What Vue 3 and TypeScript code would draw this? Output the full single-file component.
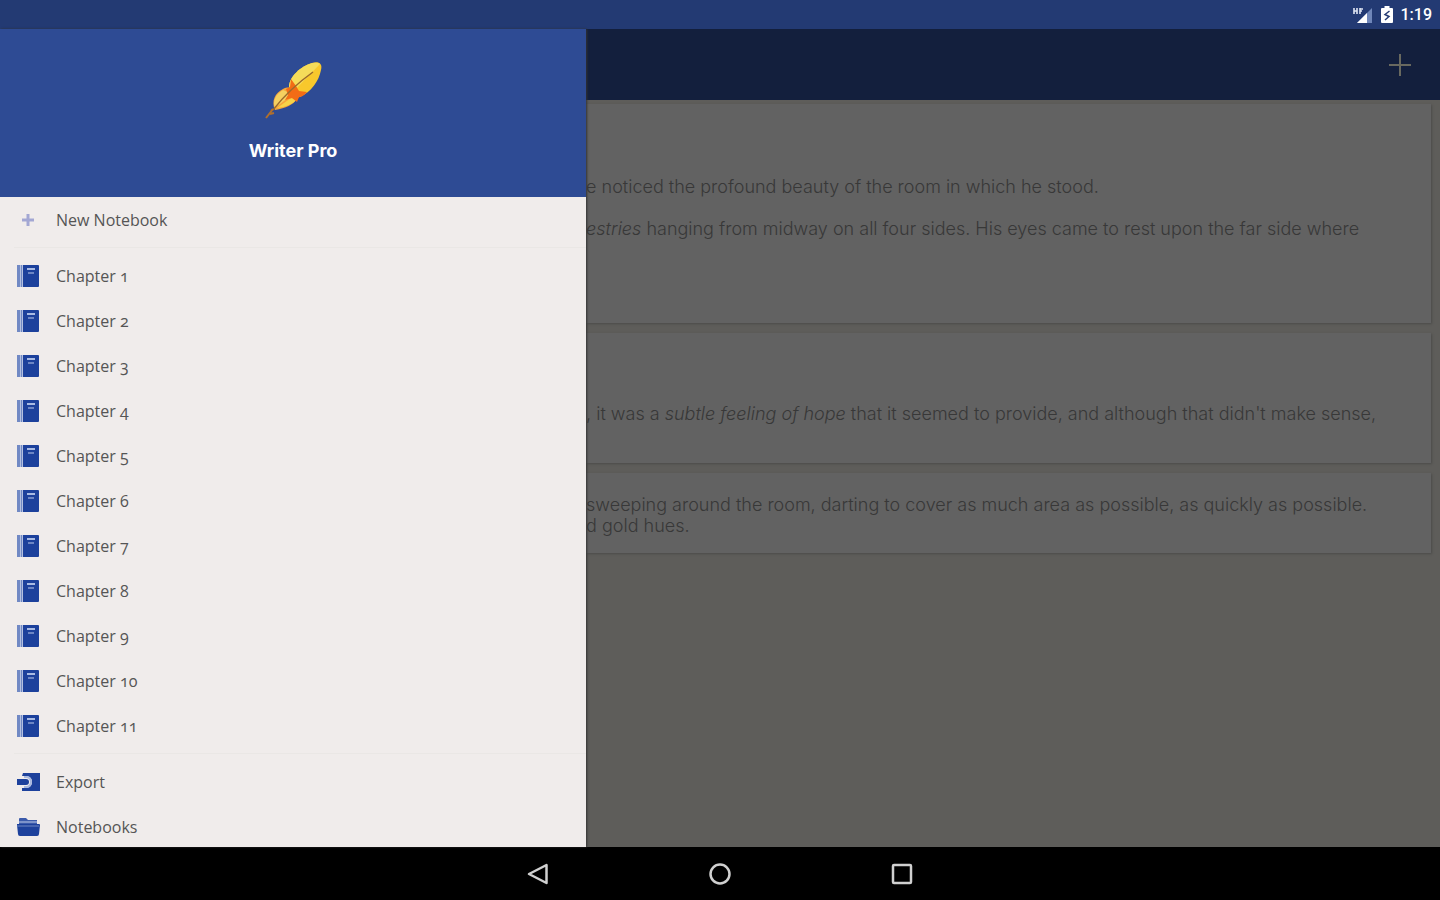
<script setup lang="ts">
interface Segment {
  text: string
  em?: boolean
}
interface Card {
  kind: string
  paragraphs: Segment[][][]
}

const chapters: string[] = Array.from({ length: 11 }, (_, i) => `Chapter ${i + 1}`)

const cards: Card[] = [
  {
    kind: 'tall',
    paragraphs: [
      [[{ text: 'e noticed the profound beauty of the room in which he stood.' }]],
      [[
        { text: 'estries', em: true },
        { text: ' hanging from midway on all four sides. His eyes came to rest upon the far side where' },
      ]],
    ],
  },
  {
    kind: 'medium',
    paragraphs: [
      [[
        { text: ', it was a ' },
        { text: 'subtle feeling of hope', em: true },
        { text: " that it seemed to provide, and although that didn't make sense," },
      ]],
    ],
  },
  {
    kind: 'short',
    paragraphs: [
      [
        [{ text: 'sweeping around the room, darting to cover as much area as possible, as quickly as possible.' }],
        [{ text: 'd gold hues.' }],
      ],
    ],
  },
]
</script>

<template>
  <div class="screen">
    <header class="status">
      <svg width="20" height="18" viewBox="0 0 20 18" aria-hidden="true">
        <path d="M19 2v15H4z" fill="#6f86b9" />
        <path d="M14 7v10H4z" fill="#fff" />
        <path d="M1 2v6M1 5h3M4 2v6M7 2v6M7 3h3M7 5h2" fill="none" stroke="#dfe5f3" stroke-width="1.6" />
      </svg>
      <svg width="12" height="17" viewBox="0 0 12 17" aria-hidden="true">
        <path d="M3.500 0h5v2H11q1 0 1 1v13q0 1-1 1H1q-1 0-1-1V3q0-1 1-1h2.500z" fill="#fff" />
        <path d="M8.500 5 4 8.500l4 2L4 14" fill="none" stroke="#243a73" stroke-width="1.500" />
      </svg>
      <time>1:19</time>
    </header>

    <div class="body">
      <nav class="drawer" aria-label="Notebooks">
        <div class="brand">
          <svg width="60" height="60" viewBox="0 0 60 60" aria-hidden="true">
            <path d="M12 49C8 40 12 32 20 28C24 26 29 26 32 29C36 32 37 35 34 38C30 44 23 47 12 49z" fill="#f6a63a" />
            <path d="M12 47C9 40 13 33 20 29L27 32L26 36z" fill="#f5d060" />
            <path d="M14 47L28 37L34 38C30 43 23 46 14 47z" fill="#f7d348" />
            <path d="M26 26C26 16 38 5 49 2C55 0 60 2 58 9C56 20 48 31 37 36C30 38 26 32 26 26z" fill="#f8c82c" />
            <path d="M26 25C27 15 38 5 49 2Q55 1 57 3L31 30z" fill="#f5dc5a" />
            <path d="M28 18L33 25L36 30L44 31C41 35 38 36 36 36L34 41L29 37L22 39L25 34L23 28L27 26z" fill="#f26c16" />
            <path d="M50 11C36 21 20 36 10 49" fill="none" stroke="#9a6a2c" stroke-width="1.500" />
            <path d="M3 57L10 48L8 50M7 53L11 52" fill="none" stroke="#b06f2c" stroke-width="2" />
          </svg>
          <h1>Writer Pro</h1>
        </div>

        <button class="item" type="button">
          <svg width="24" height="24" viewBox="0 0 24 24" aria-hidden="true">
            <path d="M12 6v12M6 12h12" stroke="#a3a7d3" stroke-width="3" />
          </svg>
          <span>New Notebook</span>
        </button>
        <hr />
        <button v-for="chapter in chapters" :key="chapter" class="item" type="button">
          <svg width="24" height="24" viewBox="0 0 24 24" aria-hidden="true">
            <path d="M1 1h3v22H1z" fill="#7189c4" />
            <path d="M4 1h3v22H4z" fill="#b4c0df" />
            <path d="M5 1h1v22H5z" fill="#7189c4" />
            <path d="M7 1h15q1 0 1 1v20q0 1-1 1H7z" fill="#1d419c" />
            <path d="M11 4h8v2h-8z" fill="#a9bbe3" />
            <path d="M12 8h6v2h-6z" fill="#6d86c4" />
          </svg>
          <span>{{ chapter }}</span>
        </button>
        <hr />
        <button class="item" type="button">
          <svg width="24" height="24" viewBox="0 0 24 24" aria-hidden="true">
            <path d="M7 3h17v18H6v-3h5q5-1 5-6T11 6H6z" fill="#1d419c" />
            <path d="M8 7h3q4 1 4 5t-4 5H8" fill="none" stroke="#a9b9df" stroke-width="2" />
            <path d="M1 9h9q3 0 3 3t-3 3H1z" fill="#1d419c" />
          </svg>
          <span>Export</span>
        </button>
        <button class="item" type="button">
          <svg width="24" height="24" viewBox="0 0 24 24" aria-hidden="true">
            <path d="M3 9V4q0-1 1-1h6l2 2h9v4z" fill="#3c5bab" />
            <path d="M3 7h18" stroke="#93a6d4" stroke-width="1.500" />
            <path d="M1 9h22q1 0 1 1l-1 9q0 2-2 2H4q-2 0-2-2l-1-9z" fill="#1d419c" />
            <path d="M1 11h22" stroke="#5470b6" stroke-width="1.500" />
          </svg>
          <span>Notebooks</span>
        </button>
      </nav>

      <main class="page">
        <div class="appbar">
          <button type="button" aria-label="Add">
            <svg width="24" height="24" viewBox="0 0 24 24" aria-hidden="true">
              <path d="M12 1v22M1 12h22" stroke="#69695f" stroke-width="2" />
            </svg>
          </button>
        </div>
        <div class="cards">
          <article v-for="card in cards" :key="card.kind" class="card" :class="card.kind">
            <p v-for="(lines, p) in card.paragraphs" :key="p">
              <span v-for="(line, l) in lines" :key="l" class="line"><template
                v-for="(part, s) in line" :key="s"><em v-if="part.em">{{ part.text }}</em><template
                v-else>{{ part.text }}</template></template></span>
            </p>
          </article>
        </div>
      </main>
    </div>

    <footer class="system">
      <button type="button" aria-label="Back">
        <svg width="24" height="24" viewBox="0 0 24 24" aria-hidden="true">
          <path d="M20.500 3v18L3 12z" />
        </svg>
      </button>
      <button type="button" aria-label="Home">
        <svg width="24" height="24" viewBox="0 0 24 24" aria-hidden="true">
          <circle cx="12" cy="12" r="9.500" />
        </svg>
      </button>
      <button type="button" aria-label="Recent apps">
        <svg width="24" height="24" viewBox="0 0 24 24" aria-hidden="true">
          <rect x="3" y="3" width="18" height="18" rx="1" />
        </svg>
      </button>
    </footer>
  </div>
</template>

<style>
body {
  margin: 0;
}
</style>

<style scoped>
.screen {
  display: flex;
  flex-direction: column;
  height: 100vh;
  overflow: hidden;
  font-family: Inter, "Open Sans", sans-serif;
}
button {
  border: 0;
  padding: 0;
  background: none;
  color: inherit;
  font: inherit;
  cursor: pointer;
}
svg {
  display: block;
  flex: none;
}
.status {
  flex: none;
  display: flex;
  align-items: center;
  justify-content: flex-end;
  gap: 8px;
  height: 29px;
  padding-right: 8px;
  background: #233a73;
  color: #fff;
  font: 500 16px/29px Roboto, sans-serif;
}
.body {
  flex: 1;
  min-height: 0;
  display: flex;
}
.drawer {
  position: relative;
  flex: none;
  width: 40.7%;
  overflow: hidden;
  background: #f0eceb;
  box-shadow: 1px 0 2px #333;
}
.brand {
  display: flex;
  flex-direction: column;
  align-items: center;
  gap: 18px;
  height: 168px;
  padding-top: 32px;
  box-sizing: border-box;
  background: #2e4b94;
  color: #fff;
}
h1 {
  margin: 0;
  font-size: 18px;
  line-height: 24px;
  font-weight: 700;
}
.item {
  display: flex;
  align-items: center;
  gap: 16px;
  width: 100%;
  height: 45px;
  padding: 0 16px;
  color: #555;
  font: 500 16px/24px "Open Sans", sans-serif;
  font-variant-numeric: oldstyle-nums;
  text-align: left;
}
hr {
  height: 1px;
  margin: 5px 0 5px 14px;
  border: 0;
  background: #eae7e5;
}
.page {
  flex: 1;
  min-width: 0;
  overflow: hidden;
  background: #5e5d5a;
}
.appbar {
  display: flex;
  align-items: center;
  justify-content: flex-end;
  height: 71px;
  padding-right: 28px;
  background: #131f3d;
}
.cards {
  display: flex;
  flex-direction: column;
  gap: 10px;
  padding: 4px 9px 0 0;
}
.card {
  background: #626262;
  color: #383838;
  box-shadow: 1px 1px 2px #4c4c4a;
  font-size: 18px;
  font-weight: 300;
  line-height: 21px;
}
.tall {
  padding: 72px 0 84px;
}
.medium {
  padding: 70px 0 39px;
}
.short {
  padding: 21px 0 17px;
}
p {
  margin: 0;
}
p + p {
  margin-top: 21px;
}
.line {
  display: block;
  white-space: nowrap;
}
.system {
  flex: none;
  display: flex;
  align-items: center;
  justify-content: center;
  gap: 158px;
  height: 53px;
  background: #000;
}
.system svg {
  fill: none;
  stroke: #d0d0d0;
  stroke-width: 2.500;
  stroke-linejoin: round;
}
</style>
